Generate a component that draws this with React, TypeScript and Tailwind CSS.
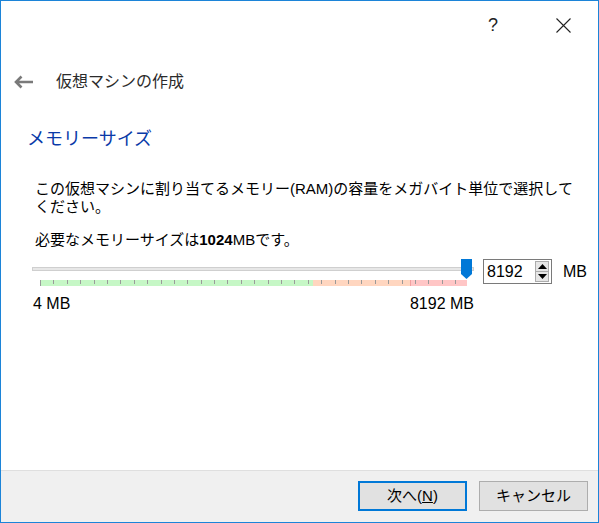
const font = { fontFamily: '"Liberation Sans", "Noto Sans CJK JP", sans-serif' };

const ticks = Array.from({ length: 32 }, (_, i) => i);

function MemorySlider() {
    return (
        <div className="w-[442px] flex flex-col">
            {/* track + thumb */}
            <div className="relative h-[20px]">
                <div className="absolute left-0 right-0 top-[8px] h-[4px] bg-[#e7e7e7] border border-[#cfcfcf]" />
                <svg className="absolute left-[429px] top-0" width="11" height="20" viewBox="0 0 11 20">
                    <path d="M0 0 H11 V15 L5.5 20 L0 15 Z" fill="#0078d7" />
                </svg>
            </div>
            {/* capacity bar */}
            <div className="relative ml-[8px] mt-[1px] w-[427px] h-[6px] flex">
                <div className="w-[273px] bg-[#c6f7c6]" />
                <div className="w-[97px] bg-[#ffd6c0]" />
                <div className="w-[57px] bg-[#ffc6c6] border-l border-[#f2a0a0]" />
                <div className="absolute inset-0 flex">
                    {ticks.map((i) => (
                        <span key={i} className="w-[13.4px] shrink-0">
                            <span className={`block w-px bg-[#9a9a9a] ${i === 0 ? "h-[6px]" : "h-[4px]"}`} />
                        </span>
                    ))}
                </div>
            </div>
            <div className="flex justify-between mt-[9px] text-[16px] leading-[18px] text-black">
                <span className="ml-[1px]">4 MB</span>
                <span>8192 MB</span>
            </div>
        </div>
    );
}

function SpinBox() {
    return (
        <div className="w-[69px] h-[25px] border border-[#7a7a7a] bg-white flex items-center justify-between pl-[3px] pr-[2px]">
            <span className="text-[16px] leading-none text-black">8192</span>
            <div className="flex flex-col h-[21px] w-[14px]">
                <div className="flex-1 bg-[#e6e6e6] border border-[#acacac] flex items-center justify-center">
                    <svg width="9" height="5" viewBox="0 0 9 5"><path d="M4.5 0 L9 5 H0 Z" fill="#000" /></svg>
                </div>
                <div className="flex-1 bg-[#e6e6e6] border border-t-0 border-[#acacac] flex items-center justify-center">
                    <svg width="9" height="5" viewBox="0 0 9 5"><path d="M0 0 H9 L4.5 5 Z" fill="#000" /></svg>
                </div>
            </div>
        </div>
    );
}

export default function App() {
    return (
        <div style={font} className="w-[599px] h-[523px] border border-[#1c84d8] bg-white flex flex-col overflow-hidden">
            {/* caption */}
            <div className="h-[48px] flex justify-end shrink-0">
                <div className="w-[70px] flex items-center justify-center text-[18px] text-[#222]">?</div>
                <div className="w-[70px] flex items-center justify-center">
                    <svg width="15" height="15" viewBox="0 0 15 15">
                        <path d="M0.5 0.5 L14.5 14.5 M14.5 0.5 L0.5 14.5" stroke="#222" strokeWidth="1.1" />
                    </svg>
                </div>
            </div>

            {/* back + title */}
            <div className="mt-[17px] h-[32px] flex items-center shrink-0">
                <svg className="ml-[12px]" width="21" height="14" viewBox="0 0 21 14">
                    <path d="M20 7 H3 M8.5 1.5 L3 7 L8.5 12.5" stroke="#7a7a7a" strokeWidth="2.6" fill="none" />
                </svg>
                <span className="ml-[22px] text-[16px] text-[#2b2b2b]">仮想マシンの作成</span>
            </div>

            {/* heading */}
            <div className="mt-[27px] h-[28px] flex items-center pl-[26px] text-[18px] text-[#0a3aa8] shrink-0">
                メモリーサイズ
            </div>

            {/* body */}
            <div className="mt-[27px] pl-[34px] pr-[12px] text-[15px] leading-[18px] text-black shrink-0">
                <p>この仮想マシンに割り当てるメモリー(RAM)の容量をメガバイト単位で選択してください。</p>
                <p className="mt-[15px]">必要なメモリーサイズは<b>1024</b>MBです。</p>
            </div>

            <div className="mt-[10px] pl-[31px] flex items-start shrink-0">
                <MemorySlider />
                <div className="ml-[9px]">
                    <SpinBox />
                </div>
                <span className="ml-[11px] h-[25px] flex items-center text-[16px] text-black">MB</span>
            </div>

            <div className="flex-1" />

            {/* footer */}
            <div className="h-[52px] shrink-0 border-t border-[#dfdfdf] bg-[#f0f0f0] flex items-start justify-end gap-[12px] pt-[10px] pr-[10px]">
                <button className="w-[109px] h-[30px] border-2 border-[#0078d7] bg-[#e1e1e1] text-[15px] text-black flex items-center justify-center">
                    次へ(<span className="underline">N</span>)
                </button>
                <button className="w-[109px] h-[30px] border border-[#adadad] bg-[#e1e1e1] text-[15px] text-black flex items-center justify-center">
                    キャンセル
                </button>
            </div>
        </div>
    );
}
